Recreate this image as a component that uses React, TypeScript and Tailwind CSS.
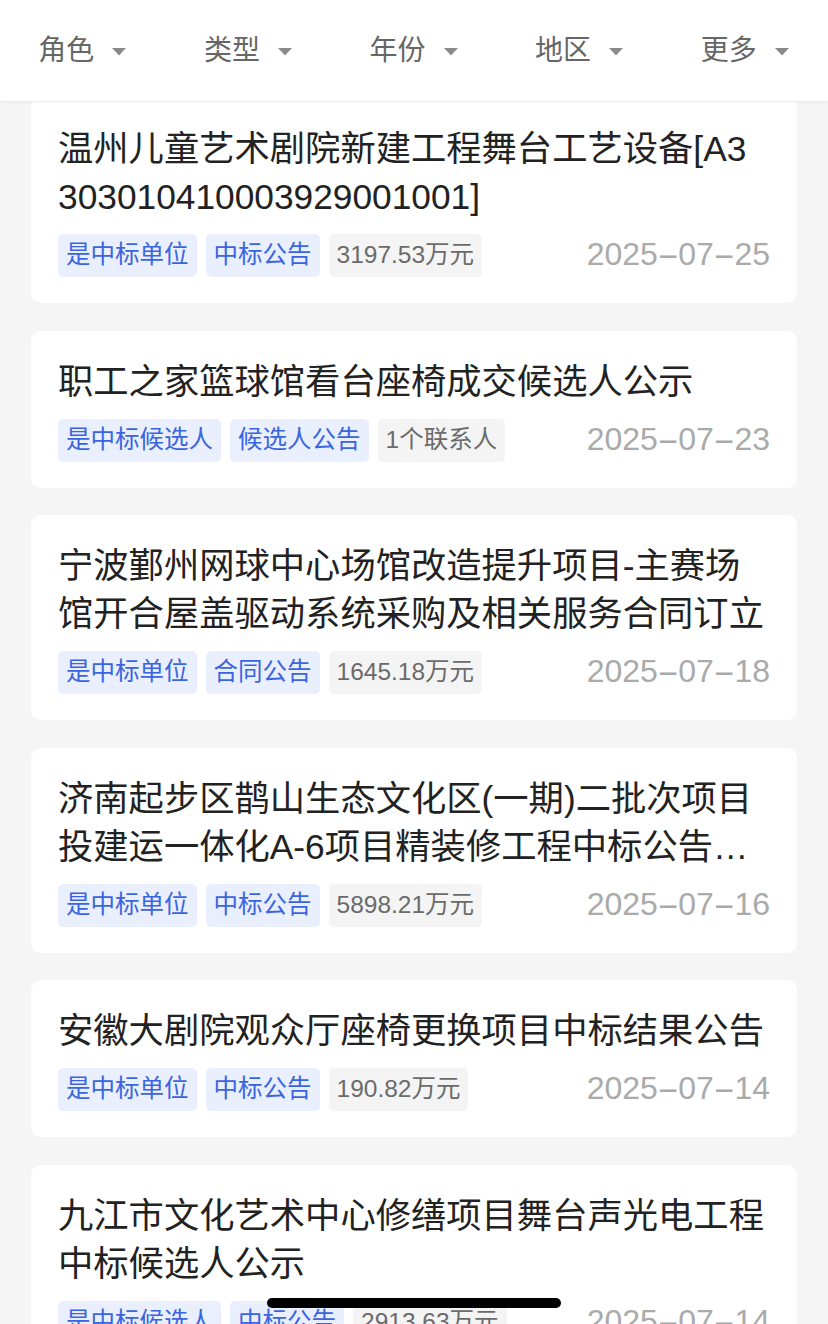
import { ReactNode } from "react";

type Tag = { label: string; kind: "blue" | "gray" };

interface Notice {
  id: number;
  title: string;
  tags: Tag[];
  date: string;
}

const filters = ["角色", "类型", "年份", "地区", "更多"];

const notices: Notice[] = [
  {
    id: 1,
    title: "温州儿童艺术剧院新建工程舞台工艺设备[A3303010410003929001001]",
    tags: [
      { label: "是中标单位", kind: "blue" },
      { label: "中标公告", kind: "blue" },
      { label: "3197.53万元", kind: "gray" },
    ],
    date: "2025-07-25",
  },
  {
    id: 2,
    title: "职工之家篮球馆看台座椅成交候选人公示",
    tags: [
      { label: "是中标候选人", kind: "blue" },
      { label: "候选人公告", kind: "blue" },
      { label: "1个联系人", kind: "gray" },
    ],
    date: "2025-07-23",
  },
  {
    id: 3,
    title: "宁波鄞州网球中心场馆改造提升项目-主赛场馆开合屋盖驱动系统采购及相关服务合同订立",
    tags: [
      { label: "是中标单位", kind: "blue" },
      { label: "合同公告", kind: "blue" },
      { label: "1645.18万元", kind: "gray" },
    ],
    date: "2025-07-18",
  },
  {
    id: 4,
    title: "济南起步区鹊山生态文化区(一期)二批次项目投建运一体化A-6项目精装修工程中标公告（二次）",
    tags: [
      { label: "是中标单位", kind: "blue" },
      { label: "中标公告", kind: "blue" },
      { label: "5898.21万元", kind: "gray" },
    ],
    date: "2025-07-16",
  },
  {
    id: 5,
    title: "安徽大剧院观众厅座椅更换项目中标结果公告",
    tags: [
      { label: "是中标单位", kind: "blue" },
      { label: "中标公告", kind: "blue" },
      { label: "190.82万元", kind: "gray" },
    ],
    date: "2025-07-14",
  },
  {
    id: 6,
    title: "九江市文化艺术中心修缮项目舞台声光电工程中标候选人公示",
    tags: [
      { label: "是中标候选人", kind: "blue" },
      { label: "中标公告", kind: "blue" },
      { label: "2913.63万元", kind: "gray" },
    ],
    date: "2025-07-14",
  },
];

const font = { fontFamily: '"Liberation Sans", "Noto Sans CJK SC", sans-serif' };

export default function App() {
  return (
    <div className="relative h-[1324px] overflow-hidden bg-[#f5f5f5]" style={font}>
      {/* 筛选栏 */}
      <header className="relative z-10 h-[102px] bg-white border-b border-[#ececec] shadow-[0_1px_3px_rgba(0,0,0,0.03)] grid grid-cols-5">
        {filters.map((f) => (
          <button key={f} className="flex items-center justify-center gap-[17px] text-[28px] text-[#666]">
            <span>{f}</span>
            <Caret />
          </button>
        ))}
      </header>

      {/* 列表 */}
      <div className="-mt-[4px] px-[31px] flex flex-col gap-[27.5px]">
        {notices.map((n) => (
          <article key={n.id} className="bg-white rounded-[10px] pt-[27px] pb-[26px] px-[27px]">
            <h3 className="pr-[5px] text-[35.3px] leading-[48px] text-[#222] break-all line-clamp-2">
              {n.title}
            </h3>
            <div className="mt-[13px] h-[43px] flex items-center">
              <div className="flex gap-[9px]">
                {n.tags.map((t) => (
                  <Chip key={t.label} kind={t.kind}>
                    {t.label}
                  </Chip>
                ))}
              </div>
              <DateText value={n.date} />
            </div>
          </article>
        ))}
      </div>

      {/* home indicator */}
      <div className="absolute left-[267px] bottom-[16px] w-[294px] h-[10px] rounded-full bg-black" />
    </div>
  );
}

function Chip({ kind, children }: { kind: "blue" | "gray"; children: ReactNode }) {
  return (
    <span
      className={`h-[43px] px-[8px] rounded-[5px] flex items-center text-[24.5px] ${
        kind === "blue" ? "bg-[#e9effd] text-[#3b64e0]" : "bg-[#f4f4f4] text-[#6b6b6b]"
      }`}
    >
      {children}
    </span>
  );
}

// 日期里的横线比默认连字符宽一些
function DateText({ value }: { value: string }) {
  const parts = value.split("-");
  return (
    <span className="ml-auto -mt-[3px] text-[32px] leading-none text-[#aaaaaa] whitespace-nowrap">
      {parts.map((p, i) => (
        <span key={i}>
          {i > 0 && <span className="inline-block w-[20.5px] text-center scale-x-[2.1]">-</span>}
          {p}
        </span>
      ))}
    </span>
  );
}

function Caret() {
  return (
    <svg width="16" height="9" viewBox="0 0 16 9" className="mt-[2px]">
      <path d="M1 1h14l-7 7.5z" fill="#8a8a8a" />
    </svg>
  );
}
